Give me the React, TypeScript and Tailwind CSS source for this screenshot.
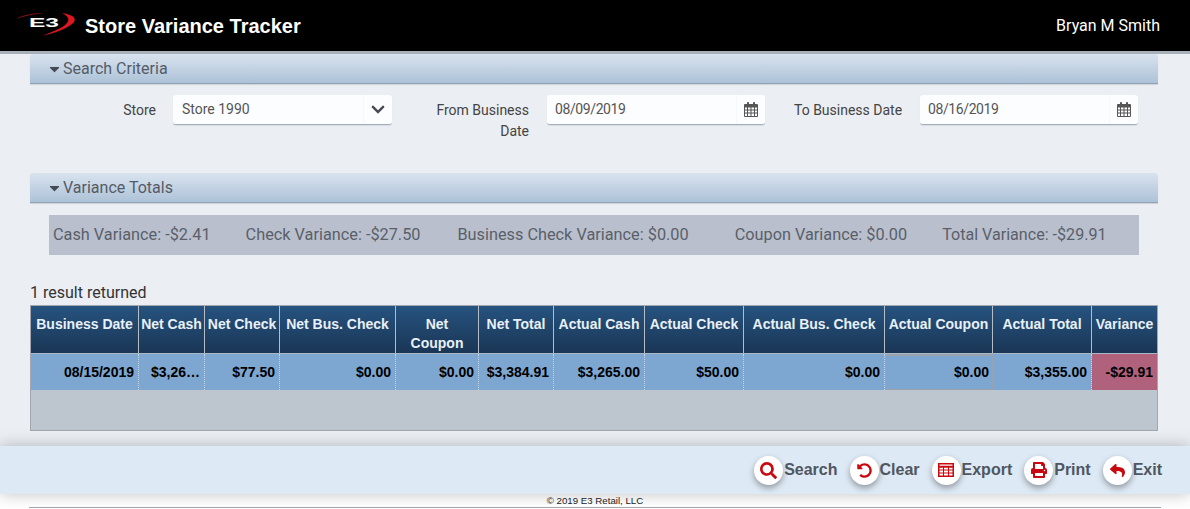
import { FaCaretDown, FaChevronDown, FaPrint, FaReply, FaSearch, FaUndoAlt } from 'react-icons/fa'
import type { ReactNode } from 'react'

const columns = [
  { title: 'Business Date', value: '08/15/2019', width: 'w-[108px]' },
  { title: 'Net Cash', value: '$3,26…', width: 'w-[66px]' },
  { title: 'Net Check', value: '$77.50', width: 'w-[75px]' },
  { title: 'Net Bus. Check', value: '$0.00', width: 'w-[116px]' },
  { title: 'Net Coupon', value: '$0.00', width: 'w-[83px]' },
  { title: 'Net Total', value: '$3,384.91', width: 'w-[75px]' },
  { title: 'Actual Cash', value: '$3,265.00', width: 'w-[91px]' },
  { title: 'Actual Check', value: '$50.00', width: 'w-[99px]' },
  { title: 'Actual Bus. Check', value: '$0.00', width: 'w-[141px]' },
  { title: 'Actual Coupon', value: '$0.00', width: 'w-[108px]' },
  { title: 'Actual Total', value: '$3,355.00', width: 'w-[99px]' },
  { title: 'Variance', value: '-$29.91', width: 'w-[65px]' },
]

function CalendarIcon() {
  return (
    <svg width="14" height="15" viewBox="0 0 14 15" fill="#555">
      <rect x="3" y="0" width="2" height="3.5" rx="0.8" />
      <rect x="9" y="0" width="2" height="3.5" rx="0.8" />
      <path d="M1.2 2 H13 a1 1 0 0 1 1 1 V14 a1 1 0 0 1 -1 1 H1 a1 1 0 0 1 -1 -1 V3 a1 1 0 0 1 1.2 -1 Z M1 5.5 V7.5 H3 V5.5 Z M4 5.5 V7.5 H6.5 V5.5 Z M7.5 5.5 V7.5 H10 V5.5 Z M11 5.5 V7.5 H13 V5.5 Z M1 8.5 V10.5 H3 V8.5 Z M4 8.5 V10.5 H6.5 V8.5 Z M7.5 8.5 V10.5 H10 V8.5 Z M11 8.5 V10.5 H13 V8.5 Z M1 11.5 V14 H3 V11.5 Z M4 11.5 V14 H6.5 V11.5 Z M7.5 11.5 V14 H10 V11.5 Z M11 11.5 V14 H13 V11.5 Z" fillRule="evenodd" />
    </svg>
  )
}

function TableIcon() {
  return (
    <svg width="16" height="14" viewBox="0 0 16 14" fill="none" stroke="currentColor">
      <rect x="0.75" y="0.75" width="14.5" height="12.5" strokeWidth="1.5" />
      <path d="M0 3.75 H16" strokeWidth="2" />
      <path d="M1 7 H15 M1 10 H15 M5.5 3 V13 M10.5 3 V13" strokeWidth="1" />
    </svg>
  )
}

function SectionHeader({ title }: { title: string }) {
  return (
    <div className="flex h-[30px] items-center rounded-t-[3px] border-b border-[#8fa3b8] bg-gradient-to-b from-[#d9e3ef] to-[#adc2d7] pt-px pl-[18px] font-['Roboto',sans-serif] text-[16px] text-[#555b66] shadow-[0_1px_1px_rgba(0,0,0,0.12)]">
      <FaCaretDown className="mr-[2px] h-[16px] w-[13px] text-[#444b55]" />
      {title}
    </div>
  )
}

function Field({ value }: { value: string }) {
  return (
    <div className="flex h-[30px] w-[218px] items-center justify-between rounded-[3px] border-b border-[#a3afbd] bg-[#fcfdfe] font-['Roboto',sans-serif] text-[14px] tracking-[-0.4px] text-[#555] shadow-[0_1px_1px_rgba(0,0,0,0.08)]">
      <span className="pl-2">{value}</span>
      <span className="flex h-full w-[29px] items-center justify-center border-l border-[#f7f8f9]">
        <CalendarIcon />
      </span>
    </div>
  )
}

function ToolButton({ icon, label, className }: { icon: ReactNode; label: string; className: string }) {
  return (
    <div className={`flex items-center ${className}`}>
      <span className="flex h-[29px] w-[29px] items-center justify-center rounded-full bg-white text-[#c8090f] shadow-[0_3px_6px_rgba(0,0,0,0.35)]">
        {icon}
      </span>
      <span className="ml-[1px] font-['Liberation_Sans',sans-serif] text-[16px] font-bold text-[#50565f]">{label}</span>
    </div>
  )
}

export default function App() {
  return (
    <div className="flex h-[509px] w-full flex-col overflow-hidden bg-[#ebeef3] font-['Liberation_Sans',sans-serif]">
      {/* top bar */}
      <header className="flex h-[54px] shrink-0 items-center justify-between border-b-[3px] border-[#a8b0b9] bg-black text-white">
        <div className="flex items-center">
          <svg width="62" height="32" viewBox="0 0 62 32" className="ml-[14px] -mt-[6px]">
            <path d="M2 12 C 10 7, 22 6, 30 6 C 20 7, 10 9, 2 12 Z" fill="#8e1118" />
            <path d="M48 6 C 60 8, 64 12, 58 17 C 52 22, 41 26, 28 29 C 40 24, 49 21, 53 16 C 56 12, 54 9, 48 6 Z" fill="#e0161f" />
            <text x="30" y="20" textLength="30" lengthAdjust="spacingAndGlyphs" textAnchor="middle" fontFamily="Liberation Sans, sans-serif" fontWeight="700" fontSize="13" fill="#fff">E3</text>
          </svg>
          <h1 className="ml-[9px] text-[20px] font-bold">Store Variance Tracker</h1>
        </div>
        <span className="mr-[30px] font-['Roboto',sans-serif] text-[16px]">Bryan M Smith</span>
      </header>

      <main className="mx-[30px] w-[1128px] grow">
        <SectionHeader title="Search Criteria" />

        <div className="mt-[11px] flex h-[78px] items-start font-['Roboto',sans-serif] text-[14px] text-[#444]">
          <label className="w-[126px] pt-[5px] text-right">Store</label>
          <div className="ml-[17px] flex h-[30px] w-[219px] items-center justify-between rounded-[3px] border-b border-[#a3afbd] bg-[#fcfdfe] text-[#555] shadow-[0_1px_1px_rgba(0,0,0,0.08)]">
            <span className="pl-[9px]">Store 1990</span>
            <span className="flex h-full w-[29px] items-center justify-center border-l border-[#f7f8f9]">
              <FaChevronDown className="h-[15px] w-[14px] text-[#444b55]" />
            </span>
          </div>
          <label className="ml-[37px] w-[100px] pt-[5px] text-right leading-[21px]">From Business Date</label>
          <div className="ml-[18px]">
            <Field value="08/09/2019" />
          </div>
          <label className="ml-[29px] w-[108px] pt-[5px] text-right leading-[21px] whitespace-nowrap">To Business Date</label>
          <div className="ml-[18px]">
            <Field value="08/16/2019" />
          </div>
        </div>

        <SectionHeader title="Variance Totals" />

        <div className="mt-[12px] ml-[19px] flex h-[40px] w-[1090px] items-center bg-[#b9bfcd] pl-[4px] font-['Roboto',sans-serif] text-[16.3px] whitespace-nowrap text-[#5a5f69]">
          <span>Cash Variance: -$2.41</span>
          <span className="ml-[35px]">Check Variance: -$27.50</span>
          <span className="ml-[37px]">Business Check Variance: $0.00</span>
          <span className="ml-[46px]">Coupon Variance: $0.00</span>
          <span className="ml-[35px] text-[16.1px]">Total Variance: -$29.91</span>
        </div>

        <p className="mt-[28px] h-[22px] font-['Roboto',sans-serif] text-[16px] leading-[20px] text-[#333]">1 result returned</p>

        {/* results grid */}
        <div className="border border-t-0 border-[#a3a7ad] bg-[#bdc5cf]">
          <div className="flex h-[48px] border-t border-[#a3a7ad] bg-gradient-to-b from-[#265380] to-[#1a3655]">
            {columns.map((col) => (
              <div
                key={col.title}
                className={`${col.width} shrink-0 border-r border-[#b6bcc4] pt-[9px] text-center text-[14px] leading-[19px] font-bold text-[#e8f0f8] last:border-r-0 ${
                  col.title === 'Net Coupon' ? 'px-[12px]' : 'whitespace-nowrap'
                }`}
              >
                {col.title}
              </div>
            ))}
          </div>
          <div className="flex h-[37px] border-t border-[#a9b7c6] bg-[#7da6d1]">
            {columns.map((col) => (
              <div
                key={col.title}
                className={`${col.width} shrink-0 truncate text-right text-[14px] font-bold text-black ${
                  col.title === 'Variance'
                    ? 'bg-[#b0627c] pr-[4px] leading-[36px]'
                    : col.title === 'Actual Coupon'
                      ? 'border border-t-2 border-[#9aa3ad] pr-[3px] leading-[32px]'
                      : 'border-r border-dotted border-[#c3d4e6] pr-[4px] leading-[36px]'
                }`}
              >
                {col.value}
              </div>
            ))}
          </div>
          <div className="h-[40px]" />
        </div>
      </main>

      <div className="relative h-[63px] shrink-0 bg-white">
        {/* action bar */}
        <div className="flex h-[48px] items-center justify-end bg-[#dde9f5] pr-[28px] shadow-[0_0_16px_rgba(0,0,0,0.25)]">
          <ToolButton icon={<FaSearch className="h-[17px] w-[17px]" />} label="Search" className="" />
          <ToolButton icon={<FaUndoAlt className="h-[15px] w-[15px]" />} label="Clear" className="ml-[12px]" />
          <ToolButton icon={<TableIcon />} label="Export" className="ml-[12px]" />
          <ToolButton icon={<FaPrint className="h-[16px] w-[16px]" />} label="Print" className="ml-[12px]" />
          <ToolButton icon={<FaReply className="h-[15px] w-[17px]" />} label="Exit" className="ml-[12px]" />
        </div>
        <p className="text-center text-[9.7px] leading-[13px] text-[#222]">© 2019 E3 Retail, LLC</p>
        <div className="mx-[29px] h-px bg-[#a3a7ad]" />
      </div>
    </div>
  )
}
